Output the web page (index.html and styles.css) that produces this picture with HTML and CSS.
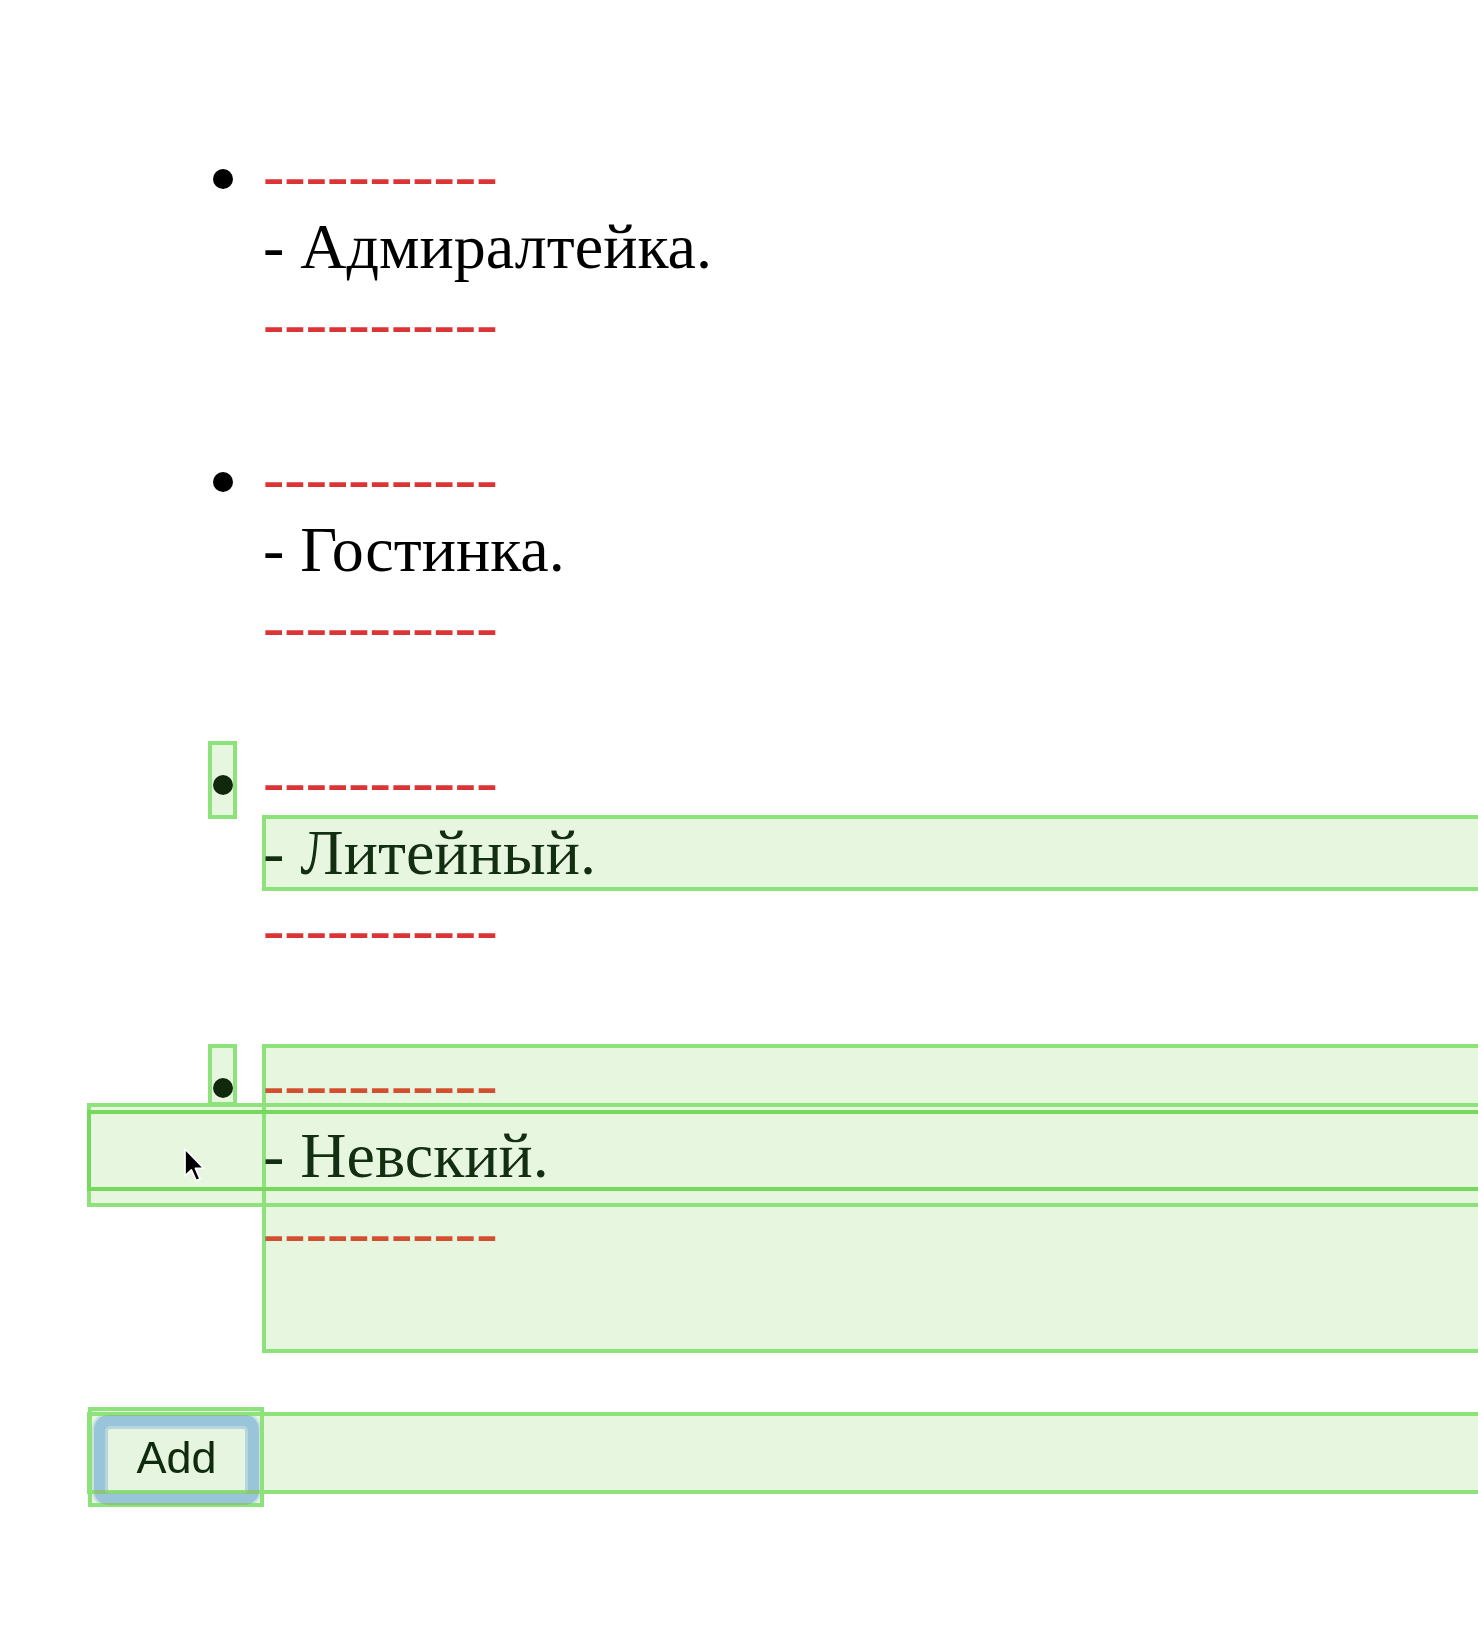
FILE: index.html
```html
<!DOCTYPE html>
<html lang="ru">
<head>
<meta charset="utf-8">
<title>Stops</title>
<link rel="stylesheet" href="styles.css">
</head>
<body>
<main class="page">
  <ul class="stops">
    <li class="stop">
      <span class="marker"><span class="disc"></span></span>
      <div class="body">
        <div class="rule">-----------</div>
        <div class="name">- Адмиралтейка.</div>
        <div class="rule">-----------</div>
      </div>
    </li>
    <li class="stop">
      <span class="marker"><span class="disc"></span></span>
      <div class="body">
        <div class="rule">-----------</div>
        <div class="name">- Гостинка.</div>
        <div class="rule">-----------</div>
      </div>
    </li>
    <li class="stop">
      <span class="marker hl"><span class="disc disc--tinted"></span></span>
      <div class="body">
        <div class="rule">-----------</div>
        <div class="name name--tinted hl hl--wide">- Литейный.</div>
        <div class="rule">-----------</div>
      </div>
    </li>
    <li class="stop">
      <span class="marker marker--short hl"><span class="disc disc--tinted"></span></span>
      <div class="body body--last body--tinted hl hl--wide">
        <div class="rule">-----------</div>
        <div class="name">- Невский.</div>
        <div class="rule">-----------</div>
        <div class="drop drop--outer"></div>
        <div class="drop drop--inner"></div>
        <svg class="cursor" width="22" height="36" viewBox="0 0 18 30">
          <path d="M1.5 1.5 L1.5 24 L6.8 19 L10.8 28 L14 26.6 L10.2 17.8 L17 17.6 Z" fill="#000" stroke="#fff" stroke-width="1.4" stroke-linejoin="round"/>
        </svg>
      </div>
    </li>
  </ul>
  <div class="actions hl hl--wide">
    <button class="add-btn" type="button">Add</button>
    <div class="add-slot"></div>
  </div>
</main>
</body>
</html>
```
FILE: styles.css
```css
html, body {
  margin: 0;
  padding: 0;
  background: #ffffff;
}

body {
  width: 1478px;
  height: 1638px;
  overflow: hidden;
  font-family: "Liberation Serif", "Times New Roman", serif;
  color: #000;
}

.page {
  padding: 136px 0 0 88px;
}

.stops {
  list-style: none;
  margin: 0;
  padding: 0 0 0 121px;
}

.stop {
  display: grid;
  grid-template-columns: 27px 1fr;
  column-gap: 27px;
  align-items: start;
}

.marker {
  display: flex;
  justify-content: center;
  height: 76px;
  padding-top: 33px;
  box-sizing: border-box;
}

.marker--short {
  height: 60px;
}

.disc {
  width: 20px;
  height: 20px;
  border-radius: 50%;
  background: #000;
}

.disc--tinted {
  background: #10290d;
}

.body {
  position: relative;
  padding-bottom: 81px;
  font-size: 64px;
  line-height: 74px;
}

.body--last {
  padding-bottom: 85px;
}

.rule {
  height: 74px;
  padding-top: 3px;
  box-sizing: border-box;
  color: #dc3434;
  white-space: nowrap;
}

.name {
  white-space: nowrap;
}

.name--tinted,
.body--tinted {
  color: #12300f;
}

.body--tinted .rule {
  color: #d2502f;
}

/* highlight overlays */
.hl {
  position: relative;
}

.hl::after,
.drop,
.add-slot {
  content: "";
  position: absolute;
  background: #e6f6df;
  border: 4px solid #8de27b;
  box-sizing: border-box;
  mix-blend-mode: darken;
  pointer-events: none;
}

.hl::after {
  inset: -1px;
}

.hl--wide::after {
  right: -8px;
}

.drop--outer {
  left: -176px;
  right: -8px;
  top: 58px;
  height: 104px;
}

.drop--inner {
  left: -176px;
  right: -8px;
  top: 65px;
  height: 81px;
  border-color: #76d95e;
}

.cursor {
  position: absolute;
  left: -80px;
  top: 102px;
}

.actions {
  margin-top: 61px;
  height: 80px;
  display: flex;
  align-items: flex-start;
}

.add-btn {
  margin: 13px 0 0 17px;
  width: 143px;
  height: 68px;
  padding: 0 0 4px;
  font-family: "Liberation Sans", Arial, sans-serif;
  font-size: 45px;
  color: #0f2a0d;
  background: #e6f5df;
  border: 3px solid #b8d5dc;
  border-radius: 5px;
  box-shadow: 0 0 0 11px #99c5db, 0 0 0 13px rgba(153, 197, 219, 0.5);
}

.add-slot {
  left: 0;
  top: -6px;
  width: 176px;
  height: 100px;
}
```
